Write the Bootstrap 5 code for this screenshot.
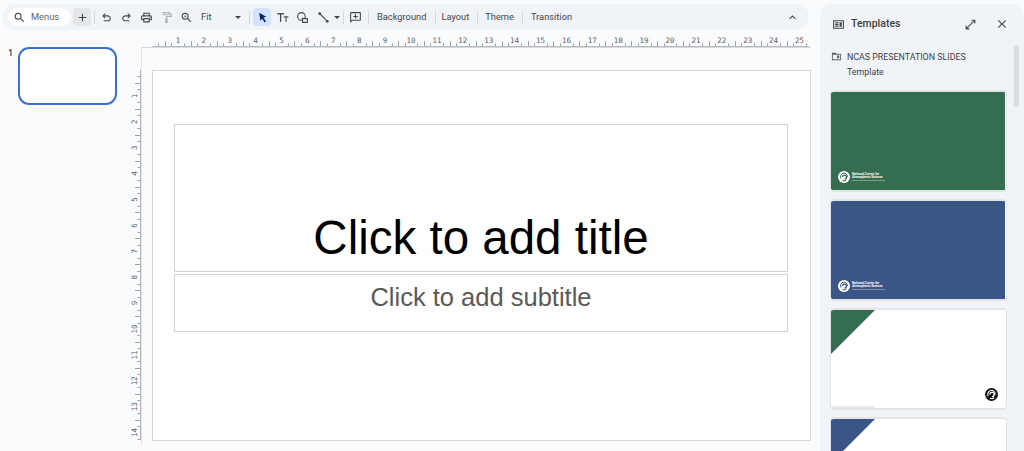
<!DOCTYPE html>
<html lang="en">
<head>
<meta charset="utf-8">
<title>Slides</title>
<link href="https://cdn.jsdelivr.net/npm/bootstrap@5.3.0/dist/css/bootstrap.min.css" rel="stylesheet">
<style>
html,body{height:451px;overflow:hidden}
body{background:#f9fbfd;color:#444746;font-family:Roboto,"Liberation Sans",sans-serif;font-size:10px}
.left-col{width:820px;padding:4px 11px 0 3px}
.tbar{height:26px;background:#f0f4f9;border-radius:13px;padding-left:5px;width:806px}
.menu-pill{width:63px;height:18px;background:#fff;border-radius:9px;padding-left:5px;gap:5px;font-size:9.3px;color:#5f6368}
.ib{width:20px;height:18px;flex:none;border-radius:4px}
.ib svg{width:13px;height:13px;fill:#444746}
.ib-plus{width:18px;background:#e3e6ea;margin-left:2px}
.ib-on{width:18px;background:#d3e3fd;margin:0 1px 0 3px}
.sepv{width:1px;height:13px;background:#d3d6da;flex:none}
.txtb{font-size:9.3px;white-space:nowrap;color:#444746}
.editor{margin-left:-3px;margin-top:4px;height:411px}
.film{width:121px;flex:none;padding:13px 0 0 8px;gap:5px;font-size:9px;font-weight:500;color:#3c4043}
.thumbx{width:99px;height:58px;background:#fff;border:2px solid #3f6fd0;border-radius:11px}
.rgrid{display:grid;grid-template-columns:20px 1fr;grid-template-rows:13px 1fr;flex:1}
.rgrid svg{display:block}
.work{border-left:1px solid #e2e5e8;border-top:1px solid #d8dbde;padding:22px 0 0 10px}
.slide{width:659px;height:371px;background:#fff;border:1px solid #d6d8da;padding:53px 22px 0 21px}
.ph{border:1px solid #cfd1d3;width:614px}
.ph-title{height:148px;font-family:"Liberation Sans",Arial,sans-serif;font-size:47.5px;line-height:1;color:#000;padding-bottom:10px}
.ph-sub{height:58px;margin-top:2px;font-family:"Liberation Sans",Arial,sans-serif;font-size:25.500px;color:#595959;padding-top:7px;line-height:30px}
.side{width:204px;margin-top:4px;height:447px;background:#f0f4f9;border-radius:12px 12px 0 0;flex:none;overflow:hidden}
.side-head{height:40px;padding:0 15px 0 12px}
.side-head .ttl{font-size:10.5px;font-weight:500;color:#3c4043;margin-left:6px}
.side-head svg{fill:#444746}
.tpl-name{padding:6px 0 0 11px;font-size:8.85px;line-height:15px;color:#3c4043;gap:5px}
.tpl-scroll{width:5px;height:62px;background:#dadce0;border-radius:3px;position:absolute;right:5px;top:41px}
.tpl-wrap{padding:0 0 0 10px;gap:7px;margin-top:10px}
.card.tpl{width:177px;height:102px;border:1px solid #e3e4e6;border-width:2px 1px;border-radius:4px;background:#fff;overflow:hidden;flex:none}
.tpl-fill{height:98px;width:174px;position:relative}
.f-green{background:#356d50}
.f-blue{background:#3b5587}
.brand{position:absolute;left:7px;bottom:7px;gap:2px;color:#fff}
.brand svg{width:12px;height:12px;flex:none}
.brand div{font-size:3.2px;line-height:3.3px;font-weight:700;white-space:nowrap}
.brand small{display:block;font-size:1.8px;line-height:2.4px;font-weight:400;opacity:.8}
.tri{display:block}
.swirl{position:absolute;right:7px;bottom:7px;width:13px;height:13px}
.strip{position:absolute;left:-1px;bottom:0;width:45px;height:2px;background:#e8eaed}
</style>
</head>
<body>
<div class="d-flex">
  <div class="left-col flex-shrink-0">
    <div class="tbar d-flex align-items-center">
      <div class="menu-pill d-flex align-items-center">
        <svg width="13" height="13" viewBox="0 0 24 24" fill="#444746"><path d="M15.5 14h-.79l-.28-.27A6.47 6.47 0 0 0 16 9.5 6.5 6.5 0 1 0 9.5 16c1.61 0 3.09-.59 4.23-1.57l.27.28v.79l5 4.99L20.49 19l-4.99-5zm-6 0C7.01 14 5 11.99 5 9.5S7.01 5 9.5 5 14 7.01 14 9.5 11.99 14 9.5 14z"/></svg>
        <span>Menus</span>
      </div>
      <div class="ib ib-plus d-flex align-items-center justify-content-center"><svg viewBox="0 0 24 24"><path d="M19 13h-6v6h-2v-6H5v-2h6V5h2v6h6z"/></svg></div>
      <div class="sepv" style="margin:0 1px 0 3px"></div>
      <div class="ib d-flex align-items-center justify-content-center"><svg viewBox="0 0 24 24"><path d="M7 19v-2h7.1c1.05 0 1.96-.33 2.73-1 .78-.67 1.17-1.5 1.17-2.5s-.39-1.83-1.17-2.5C16.06 10.33 15.15 10 14.1 10H7.8l2.6 2.6L9 14 4 9l5-5 1.4 1.4L7.8 8h6.3c1.62 0 3 .52 4.15 1.58S20 11.9 20 13.5s-.58 2.92-1.75 3.93S15.72 19 14.1 19z"/></svg></div>
      <div class="ib d-flex align-items-center justify-content-center"><svg viewBox="0 0 24 24"><path d="M17 19v-2H9.9c-1.05 0-1.96-.33-2.73-1C6.39 15.33 6 14.5 6 13.5s.39-1.83 1.17-2.5C7.94 10.33 8.85 10 9.9 10h6.3l-2.6 2.6L15 14l5-5-5-5-1.4 1.4L16.2 8H9.9c-1.62 0-3 .52-4.15 1.58S4 11.9 4 13.5s.58 2.92 1.75 3.93S8.28 19 9.9 19z"/></svg></div>
      <div class="ib d-flex align-items-center justify-content-center"><svg viewBox="0 0 24 24"><path d="M19 8h-1V3H6v5H5c-1.66 0-3 1.34-3 3v6h4v4h12v-4h4v-6c0-1.66-1.34-3-3-3zM8 5h8v3H8V5zm8 14H8v-4h8v4zm4-4h-2v-2H6v2H4v-4c0-.55.45-1 1-1h14c.55 0 1 .45 1 1v4z"/><circle cx="18" cy="11.5" r="1"/></svg></div>
      <div class="ib d-flex align-items-center justify-content-center"><svg viewBox="0 0 24 24"><path fill="#aeb1b5" d="M5 2h14v6H5V2zm2 2v2h10V4H7zm13 1h-1v2h1v2H11v5H9.500v8h5v-8H13v-3h9V5zm-8.500 11h1v4h-1z"/></svg></div>
      <div class="ib d-flex align-items-center justify-content-center"><svg viewBox="0 0 24 24"><path d="M15.5 14h-.79l-.28-.27A6.47 6.47 0 0 0 16 9.5 6.5 6.5 0 1 0 9.5 16c1.61 0 3.09-.59 4.23-1.57l.27.28v.79l5 4.99L20.49 19l-4.99-5zm-6 0C7.01 14 5 11.99 5 9.5S7.01 5 9.5 5 14 7.01 14 9.5 11.99 14 9.5 14z"/><path d="M12 10h-2v2H9v-2H7V9h2V7h1v2h2z"/></svg></div>
      <span class="txtb" style="margin-left:5px;width:34px">Fit</span>
      <svg width="6" height="3" viewBox="0 0 6 3" fill="#444746" style="margin-right:8px"><path d="M0 0h6L3 3z"/></svg>
      <div class="sepv"></div>
      <div class="ib ib-on d-flex align-items-center justify-content-center"><svg viewBox="0 0 24 24"><path fill="#0b2a5b" d="M6 3l13 7.5-5 2 4.5 7-2.6 1.6-4.4-7L8 18z"/></svg></div>
      <div class="ib d-flex align-items-center justify-content-center"><svg viewBox="0 0 24 24"><rect x="2" y="4" width="13" height="2.4"/><rect x="7.3" y="4" width="2.4" height="16"/><rect x="14" y="10" width="9" height="2"/><rect x="17.5" y="10" width="2" height="10"/></svg></div>
      <div class="ib d-flex align-items-center justify-content-center"><svg viewBox="0 0 24 24" style="fill:none;stroke:#444746;stroke-width:2"><circle cx="10" cy="10" r="7"/><path d="M12 14h9v7h-9z" fill="#f0f4f9"/><path d="M12 17v-5"/></svg></div>
      <div class="ib d-flex align-items-center justify-content-center" style="margin-left:1px"><svg viewBox="0 0 24 24"><path d="M5 3.500l15.500 15.500-1.500 1.500L3.500 5z"/><circle cx="5" cy="5" r="2.500"/><circle cx="19" cy="19" r="2.500"/></svg></div>
      <svg width="6" height="3" viewBox="0 0 6 3" fill="#444746" style="margin:0 3px 0 1px"><path d="M0 0h6L3 3z"/></svg>
      <div class="sepv"></div>
      <div class="ib d-flex align-items-center justify-content-center" style="margin:0 3px 0 1px"><svg viewBox="0 0 24 24"><path d="M20 2H4c-1.100 0-2 .9-2 2v18l4-4h14c1.100 0 2-.9 2-2V4c0-1.100-.9-2-2-2zm0 14H5.200L4 17.200V4h16v12z"/><path d="M11 6h2v3h3v2h-3v3h-2v-3H8V9h3z"/></svg></div>
      <div class="sepv"></div>
      <span class="txtb" style="margin:0 9px 0 8px">Background</span>
      <div class="sepv"></div>
      <span class="txtb" style="margin:0 8px 0 5px">Layout</span>
      <div class="sepv"></div>
      <span class="txtb" style="margin:0 8px 0 7px">Theme</span>
      <div class="sepv"></div>
      <span class="txtb" style="margin:0 8px">Transition</span>
      <div class="ms-auto" style="margin-right:10px;line-height:0"><svg width="13" height="13" viewBox="0 0 24 24" fill="#444746"><path d="M12 8l-6 6 1.400 1.400 4.600-4.600 4.600 4.600L18 14z"/></svg></div>
    </div>
    <div class="editor d-flex">
      <div class="film d-flex align-items-start">
        <span>1</span>
        <div class="thumbx"></div>
      </div>
      <div class="rgrid">
        <div></div>
        <svg id="rh" width="670" height="13" aria-label="horizontal ruler"></svg>
        <svg id="rv" width="20" height="398" aria-label="vertical ruler"></svg>
        <div class="work">
          <div class="slide">
            <div class="ph ph-title d-flex align-items-end justify-content-center">Click to add title</div>
            <div class="ph ph-sub text-center">Click to add subtitle</div>
          </div>
        </div>
      </div>
    </div>
  </div>
  <aside class="side position-relative">
    <div class="side-head d-flex align-items-center">
      <svg width="13" height="13" viewBox="0 0 24 24"><path d="M2 4h20v16H2V4zm2 2v12h16V6H4z"/><path d="M6 8h6v2H6zM6 11h6v2H6zM6 14h6v2H6zM14 8h4v8h-4z"/></svg>
      <span class="ttl">Templates</span>
      <svg class="ms-auto" width="13" height="13" viewBox="0 0 24 24"><path d="M14 3h7v7h-2V6.400L6.400 19H10v2H3v-7h2v3.600L17.600 5H14z"/></svg>
      <svg style="margin-left:18px" width="14" height="14" viewBox="0 0 24 24"><path d="M19 6.400L17.600 5 12 10.600 6.400 5 5 6.400l5.600 5.600L5 17.600 6.400 19l5.600-5.600 5.600 5.600 1.400-1.400-5.600-5.600z"/></svg>
    </div>
    <div class="tpl-name d-flex">
      <svg width="11" height="11" viewBox="0 0 24 24" fill="#5f6368" style="margin-top:1px"><path d="M2 4h8l2 2h10v14H2V4zm2 4v10h16V8H4z"/><path d="M13 10h5v6h-5z"/></svg>
      <div>NCAS PRESENTATION SLIDES<br>Template</div>
    </div>
    <div class="tpl-scroll"></div>
    <div class="tpl-wrap d-flex flex-column">
      <div class="card tpl"><div class="tpl-fill f-green">
        <div class="brand d-flex align-items-center">
          <svg viewBox="0 0 24 24"><circle cx="12" cy="12" r="12" fill="#fff"/><path d="M6 15a7 7 0 1 1 13-3M9 19a8 8 0 0 0 8-1" fill="none" stroke="#356d50" stroke-width="2"/><path d="M9 12a4 4 0 1 1 4 4" fill="none" stroke="#356d50" stroke-width="2.500"/></svg>
          <div>National Centre for<br>Atmospheric Science<small>National Environmental Research Council</small></div>
        </div>
      </div></div>
      <div class="card tpl"><div class="tpl-fill f-blue">
        <div class="brand d-flex align-items-center">
          <svg viewBox="0 0 24 24"><circle cx="12" cy="12" r="12" fill="#fff"/><path d="M6 15a7 7 0 1 1 13-3M9 19a8 8 0 0 0 8-1" fill="none" stroke="#3b5587" stroke-width="2"/><path d="M9 12a4 4 0 1 1 4 4" fill="none" stroke="#3b5587" stroke-width="2.500"/></svg>
          <div>National Centre for<br>Atmospheric Science<small>National Environmental Research Council</small></div>
        </div>
      </div></div>
      <div class="card tpl"><div class="tpl-fill">
        <svg class="tri" width="44" height="44" viewBox="0 0 44 44"><path d="M0 0h44L0 44z" fill="#356d50"/></svg>
        <svg class="swirl" viewBox="0 0 24 24"><circle cx="12" cy="12" r="12" fill="#111"/><path d="M6 15a7 7 0 1 1 13-3M9 19a8 8 0 0 0 8-1" fill="none" stroke="#fff" stroke-width="2"/><path d="M9 12a4 4 0 1 1 4 4" fill="none" stroke="#fff" stroke-width="2.500"/></svg>
        <div class="strip"></div>
      </div></div>
      <div class="card tpl"><div class="tpl-fill">
        <svg class="tri" width="44" height="44" viewBox="0 0 44 44"><path d="M0 0h44L0 44z" fill="#3b5587"/></svg>
      </div></div>
    </div>
  </aside>
</div>
<script>
(function(){
  var NS='http://www.w3.org/2000/svg',u=25.9;
  function el(p,n,a,t){var e=document.createElementNS(NS,n);for(var k in a)e.setAttribute(k,a[k]);if(t)e.textContent=t;p.appendChild(e);return e;}
  var h=document.getElementById('rh'),v=document.getElementById('rv');
  var hx=11;
  el(h,'line',{x1:hx,x2:hx+657,y1:12.5,y2:12.5,stroke:'#b5b8bb','stroke-width':1});
  var i,x,y,l;
  for(i=0;i<=102;i++){
    x=hx+i*u/4; if(x>hx+657)break;
    if(i%4===0){ if(i>0) el(h,'text',{x:x,y:9,'text-anchor':'middle','font-family':'DejaVu Sans Mono','font-size':7.5,fill:'#5f6368'},String(i/4)); continue;}
    l=i%2===0?5:2.500;
    el(h,'line',{x1:Math.round(x)+.5,x2:Math.round(x)+.5,y1:12-l,y2:12,stroke:'#9aa0a6','stroke-width':1});
  }
  var vy=23;
  el(v,'line',{x1:19.5,x2:19.5,y1:vy,y2:vy+370,stroke:'#b5b8bb','stroke-width':1});
  for(i=0;i<=57;i++){
    y=vy+i*u/4; if(y>vy+370)break;
    if(i%4===0){ if(i>0){el(v,'text',{x:0,y:0,transform:'translate(16,'+y+') rotate(-90)','text-anchor':'middle','font-family':'DejaVu Sans Mono','font-size':7.5,fill:'#5f6368'},String(i/4));} continue;}
    l=i%2===0?5:2.500;
    el(v,'line',{y1:Math.round(y)+.5,y2:Math.round(y)+.5,x1:19-l,x2:19,stroke:'#9aa0a6','stroke-width':1});
  }
})();
</script>
<script src="https://cdn.jsdelivr.net/npm/bootstrap@5.3.0/dist/js/bootstrap.bundle.min.js"></script>
</body>
</html>
